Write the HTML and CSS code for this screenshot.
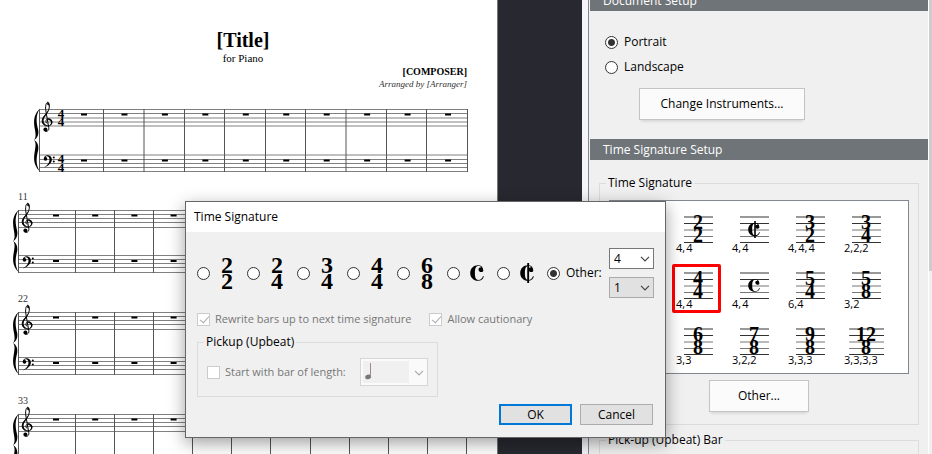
FILE: index.html
```html
<!DOCTYPE html>
<html lang="en">
<head>
<meta charset="utf-8">
<title>Time Signature</title>
<link rel="stylesheet" href="styles.css">
</head>
<body>
<svg class="defs" aria-hidden="true">
  <symbol id="treble" viewBox="0 0 13 32" overflow="visible">
    <path d="M6.3 22.6C4.2 21.4 4.6 18 7.2 17.8C11.4 17.7 12.3 23 8.6 24.6C4.6 26 1 23.4 1.2 19.6C1.5 14.6 8 11.8 8.3 6.2C8.4 3 7.4 1 6.4 1.4C4.8 2.2 4.2 6 4.9 10L7.8 26.8C8.2 29.6 5.6 31.4 3.6 29.8" fill="none" stroke="#000" stroke-width="1"/>
    <path d="M1.2 19.6C1.5 15.5 6 12.8 7.8 8.6C7 13.5 3 15.2 2.6 19.6C2.5 22.4 4.6 24.4 7.4 24.6C3.5 25.4 1 22.8 1.2 19.6z"/>
    <path d="M7.2 17.6C12.2 17.4 12.8 23.2 8.6 24.7C11 22.4 10.2 19 7.2 19z"/>
    <path d="M6.2 1.6C8 .2 9 3.4 8.3 6.4C8 4 7.4 3.2 6.2 4z"/>
    <circle cx="4.4" cy="28.6" r="2"/>
  </symbol>
  <symbol id="bass" viewBox="0 0 13 13" overflow="visible">
    <path d="M.9 4C.6-.8 8.600-1 8.900 4.200C9 8 5 11.200.6 12.600C4.200 10.400 6.600 8 6.500 4.200C6.400.600 2.600.200 1.700 3z"/>
    <circle cx="2.500" cy="3.900" r="1.800"/><circle cx="10.800" cy="2.400" r="1"/><circle cx="10.800" cy="6.400" r="1"/>
  </symbol>
  <symbol id="brace" viewBox="0 0 6 62" overflow="visible">
    <path d="M5.500 0C1 8 2.800 15 4.200 21C5 26 3 29.500 0 31C3 32.500 5 36 4.200 41C2.800 47 1 54 5.500 62C-.8 56-.5 49 1 41C1.800 36 2 33.500 0 31C2 28.500 1.800 26 1 21C-.5 13-.8 6 5.500 0z"/>
  </symbol>
  <symbol id="common" viewBox="0 0 12 16" preserveAspectRatio="none">
    <path d="M11.400 5.400C11.300 1.900 9.600.2 6.800.2C3 .2.200 3.500.200 8C.200 12.600 3 15.800 6.800 15.800C9.800 15.800 11.400 14 11.800 11.200L11.200 11C10.400 13.600 9 14.900 7.300 14.900C5 14.900 4.200 12.800 4.200 8C4.200 3.200 5 1 7.200 1C8.300 1 9.200 1.400 9.700 2.300C8 2.200 7.200 3.300 7.300 4.700C7.500 7.800 11.500 7.600 11.400 5.400z"/>
  </symbol>
  <symbol id="cut" viewBox="0 0 12 20" preserveAspectRatio="none">
    <use href="#common" y="2" width="12" height="16"/>
    <path d="M6.200 0h1.600v20h-1.600z"/>
  </symbol>
  <symbol id="chevron" viewBox="0 0 10 6" overflow="visible">
    <path d="M1 .8L5 4.800L9 .8" fill="none" stroke="currentColor" stroke-width="1.200"/>
  </symbol>
  <symbol id="staff" viewBox="0 0 30 28" preserveAspectRatio="none">
    <path d="M1 1h29" stroke="#999" stroke-width="2"/>
    <path d="M1 14h29M1 20.500h29" stroke="#777"/>
    <path d="M1 7.500h29M1 26.500h29" stroke="#333"/>
  </symbol>
  <symbol id="system" viewBox="0 0 460 74" overflow="visible">
    <path class="lines" d="M6 10.500H455M6 14.500H455M6 18.500H455M6 22.500H455M6 27.500H455M6 55.500H455M6 59.500H455M6 63.500H455M6 67.500H455M6 72.500H455"/>
    <path class="bars" d="M6.500 10V73M63.500 10V73M102.500 10V73M141.500 10V73M180.500 10V73M219.500 10V73M258.500 10V73M298.500 10V73M337.500 10V73M376.500 10V73M415.500 10V73M454.500 10V73"/>
    <path d="M41 15.500H455M41 61H455" stroke="#000" stroke-width="2" stroke-dasharray="6 33.200"/>
    <use href="#brace" x="1" y="10" width="6" height="62"/>
    <use href="#treble" x="9" y="2" width="13" height="32"/>
    <use href="#bass" x="10" y="56" width="13" height="13"/>
  </symbol>
</svg>

<div class="app">
  <main class="workspace">
    <article class="paper">
      <h1>[Title]</h1>
      <p class="subtitle">for Piano</p>
      <p class="composer">[COMPOSER]</p>
      <p class="arranger">Arranged by [Arranger]</p>
      <svg class="system first" width="436" height="75" viewBox="0 0 436 75">
        <path class="lines" d="M6 9.500H435M6 13.500H435M6 18H435M6 22H435M6 26H435M6 55H435M6 59.500H435M6 63.500H435M6 67.500H435M6 71.500H435"/>
        <path class="bars" d="M6.500 9V72M70.500 9V72M111 9V72M151.500 9V72M191.500 9V72M232.500 9V72M272.500 9V72M313 9V72M353.500 9V72M393.500 9V72M434.500 9V72"/>
        <path d="M48 14.500H435M48 60.500H435" stroke="#000" stroke-width="2" stroke-dasharray="6 34.450"/>
        <use href="#brace" x="1" y="9" width="6" height="62"/>
        <use href="#treble" x="8" y="1" width="13" height="32"/>
        <use href="#bass" x="10" y="55" width="13" height="13"/>
        <g class="meter" font-size="13"><text x="28" y="18">4</text><text x="28" y="26">4</text><text x="28" y="63">4</text><text x="28" y="72">4</text></g>
      </svg>
      <section class="row"><p>11</p><svg class="system" width="460" height="74"><use href="#system"/></svg></section>
      <section class="row"><p>22</p><svg class="system" width="460" height="74"><use href="#system"/></svg></section>
      <section class="row"><p>33</p><svg class="system" width="460" height="74"><use href="#system"/></svg></section>
    </article>
  </main>

  <aside class="panel">
    <div class="content">
      <h2>Document Setup</h2>
      <div class="orientation">
        <label><input type="radio" name="page" checked>Portrait</label>
        <label><input type="radio" name="page">Landscape</label>
      </div>
      <button class="wide instruments" type="button">Change Instruments...</button>
      <h2>Time Signature Setup</h2>
      <fieldset class="group">
        <legend>Time Signature</legend>
        <div class="list">
          <button type="button"><svg width="30" height="28"><use href="#staff" width="30" height="28"/><g class="meter" font-size="20"><text x="15" y="13">2</text><text x="15" y="26">2</text></g></svg><span>4,&#8202;4</span></button>
          <button type="button"><svg width="30" height="28"><use href="#staff" width="30" height="28"/><use href="#cut" x="9" y="5" width="12" height="17"/></svg><span>4,&#8202;4</span></button>
          <button type="button"><svg width="30" height="28"><use href="#staff" width="30" height="28"/><g class="meter" font-size="20"><text x="15" y="13">3</text><text x="15" y="26">2</text></g></svg><span>4,&#8202;4,&#8202;4</span></button>
          <button type="button"><svg width="30" height="28"><use href="#staff" width="30" height="28"/><g class="meter" font-size="20"><text x="15" y="13">3</text><text x="15" y="26">4</text></g></svg><span>2,2,2</span></button>
          <button type="button" class="picked"><svg width="30" height="28"><use href="#staff" width="30" height="28"/><g class="meter" font-size="20"><text x="15" y="13">4</text><text x="15" y="26">4</text></g></svg><span>4,&#8202;4</span></button>
          <button type="button"><svg width="30" height="28"><use href="#staff" width="30" height="28"/><use href="#common" x="9" y="7" width="12" height="13"/></svg><span>4,&#8202;4</span></button>
          <button type="button"><svg width="30" height="28"><use href="#staff" width="30" height="28"/><g class="meter" font-size="20"><text x="15" y="13">5</text><text x="15" y="26">4</text></g></svg><span>6,4</span></button>
          <button type="button"><svg width="30" height="28"><use href="#staff" width="30" height="28"/><g class="meter" font-size="20"><text x="15" y="13">5</text><text x="15" y="26">8</text></g></svg><span>3,2</span></button>
          <button type="button"><svg width="30" height="28"><use href="#staff" width="30" height="28"/><g class="meter" font-size="20"><text x="15" y="13">6</text><text x="15" y="26">8</text></g></svg><span>3,3</span></button>
          <button type="button"><svg width="30" height="28"><use href="#staff" width="30" height="28"/><g class="meter" font-size="20"><text x="15" y="13">7</text><text x="15" y="26">8</text></g></svg><span>3,2,2</span></button>
          <button type="button"><svg width="30" height="28"><use href="#staff" width="30" height="28"/><g class="meter" font-size="20"><text x="15" y="13">9</text><text x="15" y="26">8</text></g></svg><span>3,3,3</span></button>
          <button type="button" class="broad"><svg width="36" height="28"><use href="#staff" width="36" height="28"/><g class="meter" font-size="20"><text x="18" y="13">12</text><text x="18" y="26">8</text></g></svg><span>3,3,3,3</span></button>
        </div>
        <button class="wide other" type="button">Other...</button>
      </fieldset>
      <fieldset class="group pickup-bar">
        <legend>Pick-up (Upbeat) Bar</legend>
      </fieldset>
    </div>
    <div class="scrollbar"><div class="thumb"></div></div>
  </aside>
</div>

<div class="dialog" role="dialog" aria-labelledby="dialog-title">
  <h2 id="dialog-title">Time Signature</h2>
  <form class="body">
    <div class="meters">
      <label><input type="radio" name="meter"><svg width="16" height="34"><g class="meter" font-size="24"><text x="8" y="17">2</text><text x="8" y="33">2</text></g></svg></label>
      <label><input type="radio" name="meter"><svg width="16" height="34"><g class="meter" font-size="24"><text x="8" y="17">2</text><text x="8" y="33">4</text></g></svg></label>
      <label><input type="radio" name="meter"><svg width="16" height="34"><g class="meter" font-size="24"><text x="8" y="17">3</text><text x="8" y="33">4</text></g></svg></label>
      <label><input type="radio" name="meter"><svg width="16" height="34"><g class="meter" font-size="24"><text x="8" y="17">4</text><text x="8" y="33">4</text></g></svg></label>
      <label><input type="radio" name="meter"><svg width="16" height="34"><g class="meter" font-size="24"><text x="8" y="17">6</text><text x="8" y="33">8</text></g></svg></label>
      <label><input type="radio" name="meter" aria-label="Common time"><svg width="16" height="34"><use href="#common" x="1" y="9" width="14" height="16"/></svg></label>
      <label><input type="radio" name="meter" aria-label="Cut time"><svg width="16" height="34"><use href="#cut" x="1" y="7" width="14" height="20"/></svg></label>
      <label class="custom"><input type="radio" name="meter" checked>Other:</label>
      <div class="values">
        <span class="combo"><select aria-label="Beats"><option>4</option></select><svg width="10" height="6"><use href="#chevron"/></svg></span>
        <span class="combo gray"><select aria-label="Beat unit"><option>1</option></select><svg width="10" height="6"><use href="#chevron"/></svg></span>
      </div>
    </div>
    <div class="checks">
      <label><input type="checkbox" checked disabled>Rewrite bars up to next time signature</label>
      <label><input type="checkbox" checked disabled>Allow cautionary</label>
    </div>
    <fieldset class="group pickup">
      <legend>Pickup (Upbeat)</legend>
      <label><input type="checkbox" disabled>Start with bar of length:</label>
      <span class="combo note"><select aria-label="Pickup length" disabled><option></option></select>
        <svg class="quarter" width="8" height="18"><ellipse cx="3.200" cy="15" rx="3" ry="2.200" transform="rotate(-20 3 15)" fill="#777"/><path d="M5.500 1V15" stroke="#a08890"/></svg>
        <svg width="10" height="6"><use href="#chevron"/></svg></span>
    </fieldset>
    <div class="actions">
      <button type="button" class="default">OK</button>
      <button type="button">Cancel</button>
    </div>
  </form>
</div>
</body>
</html>
```
FILE: styles.css
```css
* { box-sizing: border-box; }

body {
  margin: 0;
  height: 100vh;
  overflow: hidden;
  position: relative;
  font: 12px/16px "Open Sans", "Noto Sans", sans-serif;
  color: #000;
}

h1, h2, p { margin: 0; font-weight: normal; }
h2 { font-size: 12px; }
button, select, input { font: inherit; color: inherit; margin: 0; }
svg { display: block; flex: none; overflow: visible; }
.defs { position: absolute; width: 0; height: 0; overflow: hidden; }

.app { display: flex; height: 100%; }

/* Score */
.workspace {
  flex: 1;
  min-width: 0;
  overflow: hidden;
  background: #282830;
}
.paper {
  width: 498px;
  min-height: 100%;
  padding: 29px 30px 0 12px;
  background: #fff;
  border-right: 1px solid #777;
  font-family: "Liberation Serif", serif;
}
.paper h1, .paper .subtitle { padding-left: 7px; text-align: center; }
.paper h1 { font-size: 20px; line-height: 22px; font-weight: bold; }
.paper .subtitle { font-size: 11px; line-height: 14px; }
.paper .composer { font-size: 10px; line-height: 13px; font-weight: bold; text-align: right; }
.paper .arranger { font-size: 9px; line-height: 12px; font-style: italic; text-align: right; color: #333; }
.paper .system.first { margin: 10px 0 17px 21px; }
.row { height: 102px; }
.row p { font-size: 10px; line-height: 10px; padding-left: 6px; height: 10px; color: #333; }
.row .system { margin-top: -2px; }
.lines { stroke: #808080; fill: none; }
.bars { stroke: #555; fill: none; }
.meter {
  font-family: "Liberation Serif", serif;
  font-weight: bold;
  text-anchor: middle;
}

/* Setup panel */
.panel {
  flex: 0 0 350px;
  display: flex;
  overflow: hidden;
  background: #f0f0f0;
  border-left: 6px solid #f4f4fa;
}
.content {
  flex: 1;
  margin-top: -10px;
  padding-left: 1px;
  border-left: 1px solid #828790;
  border-right: 1px solid #fff;
}
.content h2 {
  height: 21px;
  padding: 2px 13px;
  line-height: 18px;
  background: #6f7478;
  color: #fff;
}
.orientation { display: grid; gap: 9px; padding: 23px 15px 0; }
label { display: flex; align-items: center; }
.orientation label { gap: 6px; }

input {
  appearance: none;
  flex: none;
  width: 13px;
  height: 13px;
  background: #fff;
  border: 1px solid #333;
}
input[type="radio"] { border-radius: 50%; }
input[type="radio"]:checked { background: radial-gradient(circle, #333 3px, #fff 4px); }
input[type="checkbox"] { border-color: #ccc; position: relative; }
input[type="checkbox"]:checked::after {
  content: "";
  position: absolute;
  left: 4px;
  top: 0;
  width: 4px;
  height: 8px;
  border: solid #aaa;
  border-width: 0 1px 1px 0;
  transform: rotate(42deg);
}

.wide {
  display: block;
  height: 32px;
  padding: 0;
  background: #fbfbfb;
  border: 1px solid #c4c4c4;
  box-shadow: 0 3px 3px -2px rgba(0, 0, 0, 0.15);
}
.instruments { width: 166px; margin: 13px 0 19px 49px; }

.group {
  margin: 0;
  min-width: 0;
  border: 1px solid #dcdcdc;
}
.group legend { padding: 0 2px; line-height: 16px; }
.content .group { margin: 15px 9px 0; padding: 9px 9px 12px; }
.content .group legend { margin-left: -3px; }
.list {
  display: grid;
  grid-template-columns: repeat(4, 56px);
  grid-auto-rows: 56px;
  height: 174px;
  padding: 5px 0 0 62px;
  background: #fff;
  border: 1px solid #828790;
}
.list button {
  display: block;
  width: 49px;
  height: 49px;
  padding: 5px 0 0;
  margin-top: 2px;
  background: none;
  border: 2px solid transparent;
  text-align: left;
  white-space: nowrap;
}
.list svg { margin: 0 0 -2px 9px; }
.list .broad svg { margin-left: 6px; }
.list span { display: block; margin-left: 2px; font-size: 11px; line-height: 12px; }
.list .picked { border: 3px solid #f00; border-radius: 2px; padding-top: 4px; }
.list .picked svg { margin-left: 8px; }
.list .picked span { margin-left: 1px; }
.other { width: 100px; margin: 6px auto 0; }
.content .pickup-bar { margin-top: 7px; height: 80px; }

.scrollbar { width: 3px; background: #f0f0f0; }
.thumb { height: 271px; background: #cdcdcd; }

/* Dialog */
.dialog {
  position: absolute;
  left: 185px;
  top: 201px;
  width: 481px;
  background: #f0f0f0;
  border: 1px solid #666;
  box-shadow: 0 5px 16px rgba(0, 0, 0, 0.38);
}
.dialog h2 { height: 30px; padding: 0 8px; line-height: 30px; background: #fff; }
.body { padding: 16px 11px 12px; }
.meters { display: flex; align-items: center; height: 50px; }
.meters label { flex: none; width: 50px; gap: 9px; }
.meters .custom { width: 62px; gap: 6px; white-space: nowrap; }
.values { display: grid; gap: 8px; }

.combo { position: relative; display: block; }
.combo select {
  appearance: none;
  display: block;
  width: 45px;
  height: 21px;
  padding: 0 4px;
  background: #fff;
  border: 1px solid #777;
  border-radius: 0;
}
.combo svg { position: absolute; right: 4px; top: 8px; color: #444; pointer-events: none; }
.gray select { background: #e1e1e1; border-color: #aaa; }

.checks { display: flex; gap: 18px; margin-top: 13px; }
.checks label, .pickup label { gap: 5px; font-size: 11px; color: #777; white-space: nowrap; }

.pickup {
  display: flex;
  align-items: center;
  width: 241px;
  height: 63px;
  margin-top: 7px;
  padding: 0 9px 2px;
}
.pickup legend { margin-left: -3px; }
.note { margin-left: auto; }
.note select {
  width: 68px;
  height: 28px;
  border-color: #ccc;
  background: linear-gradient(#f0f0f0, #f0f0f0) 2px 2px / 46px 22px no-repeat #fff;
}
.note svg { top: 12px; color: #aaa; }
.note .quarter { left: 5px; right: auto; top: 4px; }

.actions { display: flex; justify-content: flex-end; gap: 8px; margin-top: 7px; padding-right: 1px; }
.actions button {
  width: 73px;
  height: 21px;
  padding: 0;
  line-height: 16px;
  background: #e1e1e1;
  border: 1px solid #adadad;
}
.actions .default { border: 2px solid #0078d7; }
```
